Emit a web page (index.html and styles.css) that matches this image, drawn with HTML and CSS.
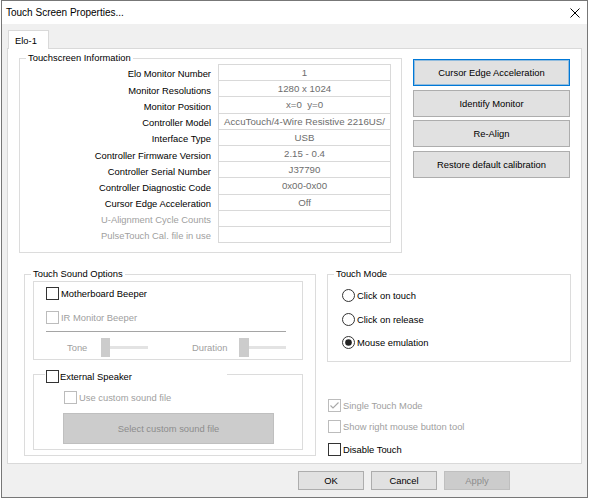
FILE: index.html
```html
<!DOCTYPE html>
<html>
<head>
<meta charset="utf-8">
<title>Touch Screen Properties</title>
<link rel="stylesheet" href="styles.css">
</head>
<body>
<div class="window">
  <div class="titlebar">
    <span class="title">Touch Screen Properties...</span>
    <svg class="close" width="10" height="10" viewBox="0 0 10 10"><path d="M0.5 0.5L9.5 9.5M9.5 0.5L0.5 9.5" stroke="#000" stroke-width="1" fill="none"/></svg>
  </div>
  <div class="client">
    <div class="tabs"><div class="tab">Elo-1</div></div>
    <div class="panel">
      <div class="top-row">
        <div class="group info">
          <div class="group-title">Touchscreen Information</div>
          <div class="info-grid">
            <div class="lbl">Elo Monitor Number</div><div class="val first">1</div>
            <div class="lbl">Monitor Resolutions</div><div class="val">1280 x 1024</div>
            <div class="lbl">Monitor Position</div><div class="val">x=0&nbsp; y=0</div>
            <div class="lbl">Controller Model</div><div class="val">AccuTouch/4-Wire Resistive 2216US/</div>
            <div class="lbl">Interface Type</div><div class="val">USB</div>
            <div class="lbl">Controller Firmware Version</div><div class="val">2.15 - 0.4</div>
            <div class="lbl">Controller Serial Number</div><div class="val">J37790</div>
            <div class="lbl">Controller Diagnostic Code</div><div class="val">0x00-0x00</div>
            <div class="lbl">Cursor Edge Acceleration</div><div class="val">Off</div>
            <div class="lbl dis">U-Alignment Cycle Counts</div><div class="val"></div>
            <div class="lbl dis">PulseTouch Cal. file in use</div><div class="val"></div>
          </div>
        </div>
        <div class="side-buttons">
          <div class="btn focus">Cursor Edge Acceleration</div>
          <div class="btn">Identify Monitor</div>
          <div class="btn">Re-Align</div>
          <div class="btn">Restore default calibration</div>
        </div>
      </div>
      <div class="bottom-row">
        <div class="group sound">
          <div class="group-title">Touch Sound Options</div>
          <div class="box beeper">
            <div class="check-row"><span class="cb"></span><span>Motherboard Beeper</span></div>
            <div class="check-row dis ir"><span class="cb"></span><span>IR Monitor Beeper</span></div>
            <div class="sep"></div>
            <div class="slider-row">
              <span class="s-lbl1">Tone</span>
              <span class="thumb"></span><span class="track"></span>
              <span class="s-lbl2">Duration</span>
              <span class="thumb t2"></span><span class="track k2"></span>
            </div>
          </div>
          <div class="box speaker">
            <div class="check-row box-title"><span class="cb"></span><span>External Speaker</span></div>
            <div class="check-row dis custom"><span class="cb"></span><span>Use custom sound file</span></div>
            <div class="btn disabled select">Select custom sound file</div>
          </div>
        </div>
        <div class="right-col">
          <div class="group mode">
            <div class="group-title">Touch Mode</div>
            <div class="radio-row r1"><svg class="rb" width="13" height="13" viewBox="0 0 13 13"><circle cx="6.5" cy="6.5" r="6" fill="#fff" stroke="#333" stroke-width="1"/></svg><span>Click on touch</span></div>
            <div class="radio-row r2"><svg class="rb" width="13" height="13" viewBox="0 0 13 13"><circle cx="6.5" cy="6.5" r="6" fill="#fff" stroke="#333" stroke-width="1"/></svg><span>Click on release</span></div>
            <div class="radio-row r3"><svg class="rb" width="13" height="13" viewBox="0 0 13 13"><circle cx="6.5" cy="6.5" r="6" fill="#fff" stroke="#333" stroke-width="1"/><circle cx="6.5" cy="6.5" r="3.3" fill="#222"/></svg><span>Mouse emulation</span></div>
          </div>
          <div class="check-row dis opt o1"><span class="cb"><svg width="11" height="11" viewBox="0 0 11 11"><path d="M1.5 5.5L4 8L9.5 2.5" stroke="#a8a8a8" stroke-width="1.1" fill="none"/></svg></span><span>Single Touch Mode</span></div>
          <div class="check-row dis opt o2"><span class="cb"></span><span>Show right mouse button tool</span></div>
          <div class="check-row opt o3"><span class="cb"></span><span>Disable Touch</span></div>
        </div>
      </div>
    </div>
    <div class="dialog-buttons">
      <div class="btn dbtn">OK</div>
      <div class="btn dbtn">Cancel</div>
      <div class="btn dbtn disabled">Apply</div>
    </div>
  </div>
</div>
</body>
</html>
```
FILE: styles.css
```css
* { box-sizing: border-box; }
html, body { margin: 0; padding: 0; background: #fff; }
body {
  font-family: "Liberation Sans", Arial, sans-serif;
  font-size: 9.4px;
  color: #000;
}
.window {
  margin-left: 1px;
  width: 587px;
  height: 498px;
  border: 1px solid #777;
  background: #f0f0f0;
  display: flex;
  flex-direction: column;
}
.titlebar {
  height: 23px;
  flex: none;
  background: #fff;
  display: flex;
  align-items: center;
  justify-content: space-between;
  padding-left: 4px;
  padding-right: 7px;
}
.title { font-size: 10px; color: #000; }
.close { display: block; }
.client { flex: 1; display: flex; flex-direction: column; }
.tabs { height: 24px; flex: none; padding-top: 6px; padding-left: 6px; display: flex; align-items: flex-start; }
.tab {
  position: relative;
  z-index: 1;
  height: 19px;
  width: 41px;
  border: 1px solid #d9d9d9;
  border-bottom: none;
  background: #fff;
  padding-left: 6px;
  display: flex;
  align-items: center;
}
.panel {
  flex: none;
  margin-left: 5px;
  width: 575px;
  height: 416px;
  border: 1px solid #d9d9d9;
  background: #fff;
}
.group { border: 1px solid #dcdcdc; }
.group-title {
  width: max-content;
  margin: -7px 0 0 6px;
  padding: 0 2px;
  height: 12px;
  line-height: 12px;
  background: #fff;
}
.top-row { display: flex; align-items: flex-start; padding-left: 11px; }
.info { margin-top: 9px; width: 383px; height: 195px; }
.info-grid { display: grid; grid-template-columns: 191px 173px; column-gap: 7px; }
.lbl {
  display: flex;
  align-items: center;
  justify-content: flex-end;
  padding-top: 2px;
  white-space: nowrap;
}
.dis { color: #a0a0a0; }
.val {
  height: 17.2px;
  margin-top: -1px;
  border: 1px solid #d9d9d9;
  color: #6d6d6d;
  font-size: 9.7px;
  display: flex;
  align-items: center;
  justify-content: center;
  white-space: nowrap;
  overflow: hidden;
}
.val.first { margin-top: 0; }
.side-buttons {
  margin-left: 11px;
  margin-top: 10px;
  width: 157px;
  display: flex;
  flex-direction: column;
  gap: 3.7px;
}
.btn {
  background: #e1e1e1;
  border: 1px solid #adadad;
  display: flex;
  align-items: center;
  justify-content: center;
  white-space: nowrap;
}
.side-buttons .btn { height: 27px; }
.btn.focus { border-color: #0078d7; box-shadow: inset 0 0 0 1px rgba(0, 120, 215, 0.35); }
.btn.disabled { background: #cccccc; border-color: #bfbfbf; color: #8d8d8d; }

.bottom-row { display: flex; align-items: flex-start; padding-left: 16px; margin-top: 21px; }
.sound { width: 292px; padding-bottom: 5px; }
.box { border: 1px solid #dcdcdc; }
.beeper { margin: 1px 0 0 8px; width: 270px; padding: 3px 0 2px 12px; }
.check-row { height: 16px; display: flex; align-items: center; gap: 2px; white-space: nowrap; }
.cb {
  width: 13px;
  height: 13px;
  border: 1px solid #333;
  background: #fff;
  flex: none;
  display: block;
}
.cb svg { display: block; }
.dis .cb { border-color: #bcbcbc; }
.ir { margin-top: 8px; }
.sep { margin-top: 6px; width: 240px; height: 1px; background: #a5a5a5; }
.slider-row { margin-top: 6px; height: 19px; display: flex; align-items: center; color: #a0a0a0; }
.s-lbl1 { margin-left: 21px; width: 34px; }
.s-lbl2 { margin-left: 44px; width: 47px; }
.thumb { width: 9px; height: 19px; background: #cccccc; flex: none; }
.thumb.t2 { width: 10px; }
.track { width: 38px; height: 3px; background: #e3e3e3; flex: none; }
.track.k2 { width: 37px; }
.speaker { margin: 14px 0 0 8px; width: 270px; padding-bottom: 5px; }
.box-title { margin: -6px 0 0 11px; width: 182px; height: 14px; padding-left: 1px; background: #fff; gap: 1px; }
.custom { margin: 6px 0 0 30px; }
.select { margin: 8px 0 0 29px; width: 211px; height: 31px; }

.right-col { margin-left: 11px; width: 244px; }
.mode { padding-bottom: 11px; }
.radio-row { height: 16px; display: flex; align-items: center; gap: 2px; margin-left: 14px; white-space: nowrap; }
.rb { display: block; flex: none; }
.r1 { margin-top: 7px; }
.r2 { margin-top: 8px; }
.r3 { margin-top: 7px; }
.opt { margin-left: 1px; }
.o1 { margin-top: 35px; }
.o2 { margin-top: 5px; }
.o3 { margin-top: 7px; }

.dialog-buttons { display: flex; gap: 7px; padding-left: 296px; margin-top: 7px; }
.dbtn { width: 66px; height: 19px; }
```
